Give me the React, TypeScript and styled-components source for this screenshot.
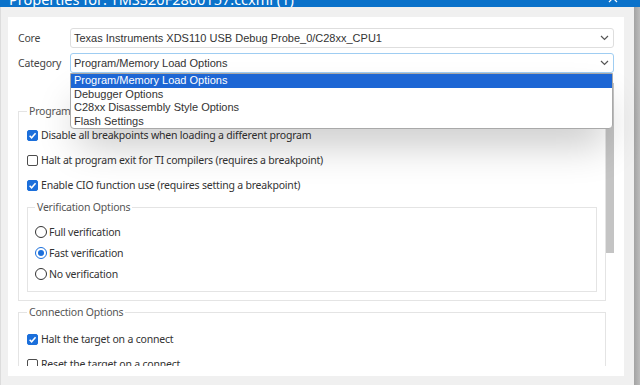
import React from 'react';
import styled, { createGlobalStyle } from 'styled-components';

const uiFont = `'Noto Sans', 'Open Sans', sans-serif`;
const fieldFont = `'Liberation Sans', Arial, sans-serif`;
const accent = '#1b6fdb';

const GlobalStyle = createGlobalStyle`
  html, body {
    margin: 0;
    padding: 0;
    width: 640px;
    height: 385px;
    overflow: hidden;
    background: #f0f0f0;
  }

  #root {
    height: 385px;
  }
`;

const Screen = styled.div`
  width: 640px;
  height: 385px;
  display: flex;
  flex-direction: column;
`;

const TitleBar = styled.div`
  flex: none;
  height: 7px;
  overflow: hidden;
  display: flex;
  align-items: flex-end;
  justify-content: space-between;
  padding: 0 22px 0 9px;
  background: #0b72ca;
  color: #fff;
  font: 14.5px/14px ${uiFont};
`;

const TitleText = styled.span`
  white-space: nowrap;
  margin-bottom: 1px;
`;

const CloseGlyph = styled.svg`
  flex: none;
  margin-bottom: 4px;
`;

const Main = styled.div`
  flex: 1;
  min-height: 0;
  display: flex;
`;

const Frame = styled.div`
  flex: 1;
  min-width: 0;
  display: flex;
  padding: 10px 10px 9px 7px;
  border-left: 1px solid #dcdcdc;
  background: #f0f0f0;
`;

const EdgeShade = styled.div`
  flex: none;
  width: 6px;
  background: linear-gradient(to right, #a3a3a3, #bcbcbc);
`;

const Panel = styled.div`
  flex: 1;
  min-width: 0;
  display: flex;
  flex-direction: column;
  padding: 11px 10px 10px 10px;
  background: #fff;
`;

const Form = styled.div`
  flex: none;
  display: flex;
  flex-direction: column;
  gap: 5px;
`;

const FieldRow = styled.div`
  display: flex;
  align-items: center;
  height: 20px;
`;

const FieldLabel = styled.span`
  flex: none;
  width: 52px;
  color: #444;
  font: 10.5px/14px ${uiFont};
  letter-spacing: -0.2px;
`;

const SelectWrap = styled.div`
  flex: 1;
  min-width: 0;
  position: relative;
`;

const SelectBox = styled.div<{ $focused?: boolean }>`
  box-sizing: border-box;
  height: 20px;
  display: flex;
  align-items: center;
  justify-content: space-between;
  padding: 0 4px 0 3px;
  border: 1px solid ${(p) => (p.$focused ? '#9fcdf2' : '#dedede')};
  border-radius: 3px;
  color: #333;
  font: 11px/14px ${fieldFont};
  white-space: nowrap;
`;

const DropList = styled.div`
  position: absolute;
  top: 100%;
  left: 0;
  right: 1px;
  z-index: 10;
  background: #fff;
  border: 1px solid #a9a9a9;
  border-radius: 0 0 4px 4px;
  box-shadow: 0 22px 40px -8px rgba(0, 0, 0, 0.24);
  overflow: hidden;
`;

const DropItem = styled.div<{ $active?: boolean }>`
  height: 13.5px;
  padding-left: 3px;
  font: 11px/13.5px ${fieldFont};
  white-space: nowrap;
  background: ${(p) => (p.$active ? '#1d66d4' : 'transparent')};
  color: ${(p) => (p.$active ? '#fff' : '#333')};
`;

const ScrollArea = styled.div`
  flex: 1;
  min-height: 0;
  display: flex;
  margin-top: 10px;
`;

const Viewport = styled.div`
  flex: 1;
  min-width: 0;
  overflow: hidden;
  display: flex;
  flex-direction: column;
  padding-top: 21px;
`;

const ScrollTrack = styled.div`
  flex: none;
  width: 8px;
`;

const ScrollThumb = styled.div`
  height: 170px;
  background: #c4c4c4;
`;

const Group = styled.fieldset<{ $pad: string; $gap: number; $top?: number }>`
  margin: ${(p) => p.$top || 0}px 0 0 0;
  min-width: 0;
  flex: none;
  display: flex;
  flex-direction: column;
  gap: ${(p) => p.$gap}px;
  padding: ${(p) => p.$pad};
  border: 1px solid #e4e4e4;
`;

const Legend = styled.legend`
  padding: 0 2px;
  color: #555;
  font: 10.5px/14px ${uiFont};
  letter-spacing: -0.2px;
`;

const OptionRow = styled.label<{ $h: number; $gap: number }>`
  flex: none;
  display: flex;
  align-items: center;
  gap: ${(p) => p.$gap}px;
  height: ${(p) => p.$h}px;
  color: #333;
  font: 10.5px/14px ${uiFont};
  letter-spacing: -0.2px;
  white-space: nowrap;
`;

const CheckBox = styled.span<{ $checked?: boolean }>`
  flex: none;
  box-sizing: border-box;
  width: 11px;
  height: 11px;
  display: flex;
  align-items: center;
  justify-content: center;
  border: 1px solid ${(p) => (p.$checked ? accent : '#4d4d4d')};
  border-radius: 2px;
  background: ${(p) => (p.$checked ? accent : '#fff')};
`;

const RadioRing = styled.span<{ $checked?: boolean }>`
  flex: none;
  box-sizing: border-box;
  width: 12px;
  height: 12px;
  display: flex;
  align-items: center;
  justify-content: center;
  border: 1px solid ${(p) => (p.$checked ? accent : '#333')};
  border-radius: 50%;
`;

const RadioDot = styled.span`
  width: 6px;
  height: 6px;
  border-radius: 50%;
  background: ${accent};
`;

const Chevron = () => (
  <svg width='9' height='6' viewBox='0 0 9 6'>
    <polyline
      fill='none'
      points='1,1 4.5,4.5 8,1'
      stroke='#555'
      strokeWidth='1.2'
    />
  </svg>
);

const Check = ({ label, checked }: { label: string; checked?: boolean }) => (
  <OptionRow $gap={3} $h={20}>
    <CheckBox $checked={checked}>
      {checked && (
        <svg width='9' height='9' viewBox='0 0 10 10'>
          <polyline
            fill='none'
            points='1.8,5.2 4,7.5 8.4,2.4'
            stroke='#fff'
            strokeWidth='1.7'
          />
        </svg>
      )}
    </CheckBox>
    {label}
  </OptionRow>
);

const Radio = ({ label, checked }: { label: string; checked?: boolean }) => (
  <OptionRow $gap={2} $h={18}>
    <RadioRing $checked={checked}>{checked && <RadioDot />}</RadioRing>
    {label}
  </OptionRow>
);

const categories = [
  'Program/Memory Load Options',
  'Debugger Options',
  'C28xx Disassembly Style Options',
  'Flash Settings'
];

export default function App() {
  return (
    <Screen>
      <GlobalStyle />
      <TitleBar>
        <TitleText>Properties for: TMS320F2800157.ccxml (1)</TitleText>
        <CloseGlyph width='10' height='10' viewBox='0 0 10 10'>
          <path d='M1 1 L9 9 M9 1 L1 9' stroke='#fff' strokeWidth='1.2' />
        </CloseGlyph>
      </TitleBar>
      <Main>
        <Frame>
          <Panel>
            <Form>
              <FieldRow>
                <FieldLabel>Core</FieldLabel>
                <SelectWrap>
                  <SelectBox>
                    Texas Instruments XDS110 USB Debug Probe_0/C28xx_CPU1
                    <Chevron />
                  </SelectBox>
                </SelectWrap>
              </FieldRow>
              <FieldRow>
                <FieldLabel>Category</FieldLabel>
                <SelectWrap>
                  <SelectBox $focused>
                    Program/Memory Load Options
                    <Chevron />
                  </SelectBox>
                  <DropList>
                    {categories.map((c, i) => (
                      <DropItem key={c} $active={i === 0}>{c}</DropItem>
                    ))}
                  </DropList>
                </SelectWrap>
              </FieldRow>
            </Form>
            <ScrollArea>
              <Viewport>
                <Group $gap={5} $pad='7px 8px 8px 8px'>
                  <Legend>Program/Memory Load Options</Legend>
                  <Check checked label='Disable all breakpoints when loading a different program' />
                  <Check label='Halt at program exit for TI compilers (requires a breakpoint)' />
                  <Check checked label='Enable CIO function use (requires setting a breakpoint)' />
                  <Group $gap={3} $pad='9px 8px 8px 7px'>
                    <Legend>Verification Options</Legend>
                    <Radio label='Full verification' />
                    <Radio checked label='Fast verification' />
                    <Radio label='No verification' />
                  </Group>
                </Group>
                <Group $gap={5} $pad='10px 8px 0 8px' $top={4}>
                  <Legend>Connection Options</Legend>
                  <Check checked label='Halt the target on a connect' />
                  <Check label='Reset the target on a connect' />
                </Group>
              </Viewport>
              <ScrollTrack>
                <ScrollThumb />
              </ScrollTrack>
            </ScrollArea>
          </Panel>
        </Frame>
        <EdgeShade />
      </Main>
    </Screen>
  );
}
